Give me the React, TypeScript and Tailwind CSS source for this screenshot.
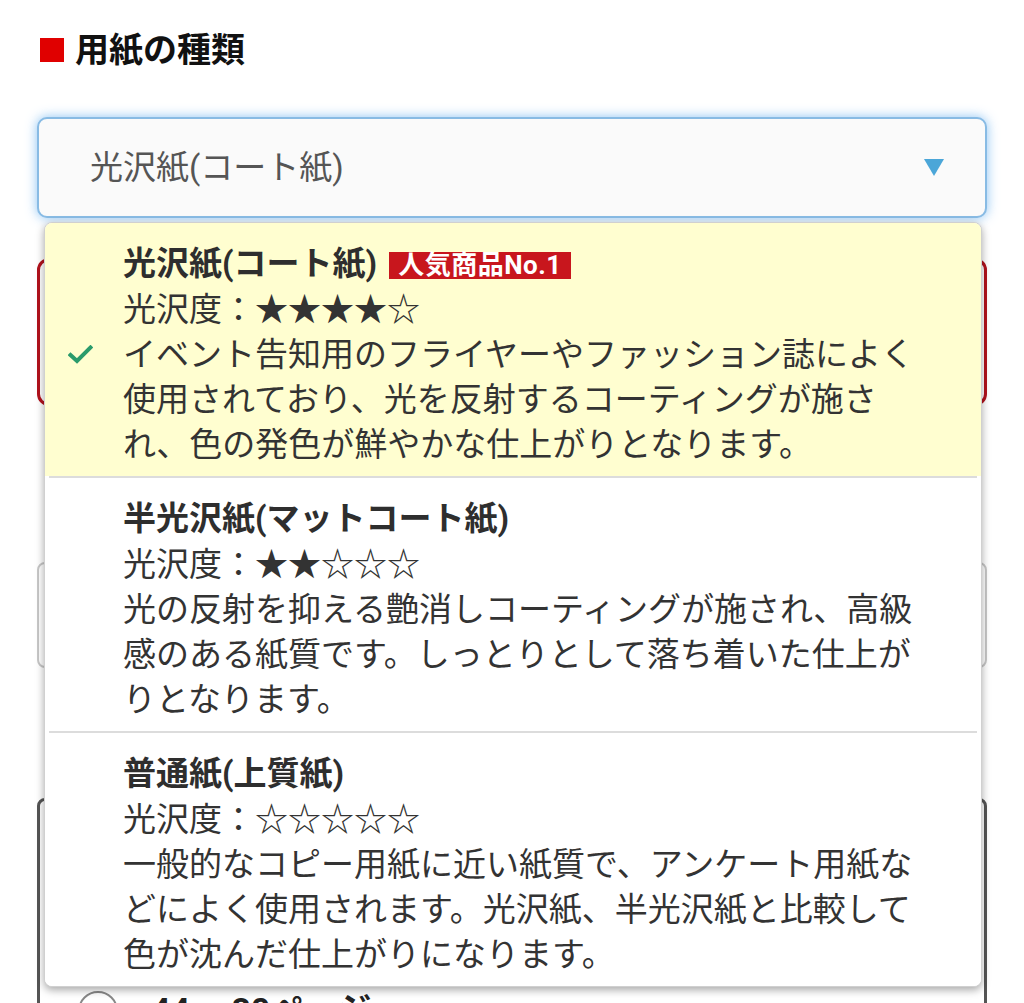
const papers = [
  {
    name: "光沢紙(コート紙)",
    badge: "人気商品No.1",
    stars: "★★★★☆",
    desc: "イベント告知用のフライヤーやファッション誌によく使用されており、光を反射するコーティングが施され、色の発色が鮮やかな仕上がりとなります。",
    selected: true,
  },
  {
    name: "半光沢紙(マットコート紙)",
    stars: "★★☆☆☆",
    desc: "光の反射を抑える艶消しコーティングが施され、高級感のある紙質です。しっとりとして落ち着いた仕上がりとなります。",
  },
  {
    name: "普通紙(上質紙)",
    stars: "☆☆☆☆☆",
    desc: "一般的なコピー用紙に近い紙質で、アンケート用紙などによく使用されます。光沢紙、半光沢紙と比較して色が沈んだ仕上がりになります。",
  },
];

function Check() {
  return (
    <svg width="25" height="19" viewBox="0 0 25 19" fill="none">
      <path d="M2.5 10 L9 16 L22.5 2.5" stroke="#2a9b6b" strokeWidth="4" strokeLinecap="square" />
    </svg>
  );
}

export default function App() {
  return (
    <div
      className="h-[1003px] overflow-hidden bg-white text-[#333]"
      style={{ fontFamily: 'Roboto, "Noto Sans CJK JP", sans-serif' }}
    >
      <div className="flex items-center gap-[11px] pl-[40px] pt-[30px]">
        <span className="h-[24px] w-[24px] bg-[#e00000]" />
        <h2 className="text-[34px] font-bold leading-[40px] text-[#111]">用紙の種類</h2>
      </div>

      <div className="relative mx-[37px] mt-[47px]">
        {/* select */}
        <div className="flex h-[101px] items-center justify-between rounded-[10px] border-2 border-[#88bbe4] bg-[#fafafa] pl-[51px] pr-[41px] shadow-[0_0_12px_rgba(110,180,240,0.8)]">
          <span className="text-[33px] leading-[45px] text-[#555]">光沢紙(コート紙)</span>
          <svg width="20" height="17" viewBox="0 0 20 17">
            <path d="M0 0 H20 L10 17 Z" fill="#4ba6d8" />
          </svg>
        </div>

        {/* page content below the select */}
        <div className="mt-[40px] h-[148px] rounded-xl border-[3px] border-[#b3121c]" />
        <div className="mt-[156px] h-[106px] rounded-lg border-2 border-[#c8c8c8]" />
        <div className="mt-[130px] h-[300px] rounded-lg border-[3px] border-[#555] pl-[38px] pt-[184px]">
          <div className="flex items-center gap-[33px]">
            <span className="h-[40px] w-[40px] rounded-full border-2 border-[#888] bg-white" />
            <span className="text-[34px] font-bold text-[#222]">44p~80ページ</span>
          </div>
        </div>

        {/* dropdown list */}
        <ul className="absolute left-[7px] top-[105px] w-[938px] overflow-hidden rounded-lg border border-[#d0d0d0] bg-white shadow-[0_3px_8px_rgba(0,0,0,0.35)]">
          {papers.map((p, i) => (
            <li key={p.name}>
              {i > 0 && <div className="mx-[4px] h-[2px] bg-[#dcdcdc]" />}
              <div className={`flex pb-[9px] pt-[18px] ${p.selected ? "bg-[#fffed0]" : "bg-white"}`}>
                <div className="flex w-[78px] shrink-0 items-center pl-[23px]">{p.selected && <Check />}</div>
                <div className="min-w-0 flex-1 pr-[52px] text-[33px] leading-[45px]">
                  <div className="flex items-center gap-[12px]">
                    <span className="font-bold text-[#2e2e2e]">{p.name}</span>
                    {p.badge && (
                      <span className="mt-[4px] bg-[#c8161d] px-[9px] text-[26px] font-bold leading-[27px] tracking-[0.5px] text-white">
                        {p.badge}
                      </span>
                    )}
                  </div>
                  <p className="mt-[1px]">光沢度：{p.stars}</p>
                  <p>{p.desc}</p>
                </div>
              </div>
            </li>
          ))}
        </ul>
      </div>
    </div>
  );
}
